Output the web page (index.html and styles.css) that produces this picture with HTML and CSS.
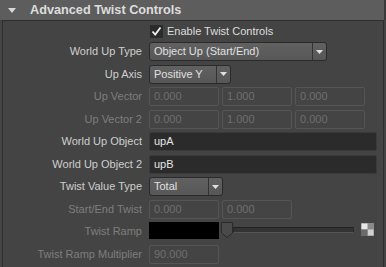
FILE: index.html
```html
<!DOCTYPE html>
<html lang="en">
<head>
    <meta charset="UTF-8">
    <title>Advanced Twist Controls</title>
    <link rel="stylesheet" href="styles.css">
</head>
<body>
    <div class="panel">
        <div class="header">
            <svg class="collapse" width="8" height="5" viewBox="0 0 8 5"><polygon points="0,0 8,0 4,5" fill="#d8d8d8"/></svg>
            <span class="title">Advanced Twist Controls</span>
        </div>

        <div class="body">
            <div class="row check-row">
                <span class="label"></span>
                <label class="check">
                    <span class="box">
                        <svg width="11" height="11" viewBox="0 0 11 11"><polyline points="1.5,5.5 4.2,8.5 9.5,1.5" fill="none" stroke="#f0f0f0" stroke-width="1.8"/></svg>
                    </span>
                    Enable Twist Controls
                </label>
            </div>

            <div class="row">
                <span class="label">World Up Type</span>
                <div class="dropdown" style="width: 178px">
                    <span class="value">Object Up (Start/End)</span>
                    <span class="drop-btn"><svg width="7" height="4" viewBox="0 0 7 4"><polygon points="0,0 7,0 3.5,4" fill="#e0e0e0"/></svg></span>
                </div>
            </div>

            <div class="row">
                <span class="label">Up Axis</span>
                <div class="dropdown" style="width: 82px">
                    <span class="value">Positive Y</span>
                    <span class="drop-btn"><svg width="7" height="4" viewBox="0 0 7 4"><polygon points="0,0 7,0 3.5,4" fill="#e0e0e0"/></svg></span>
                </div>
            </div>

            <div class="row">
                <span class="label off">Up Vector</span>
                <div class="fields">
                    <span class="num off">0.000</span>
                    <span class="num off">1.000</span>
                    <span class="num off">0.000</span>
                </div>
            </div>

            <div class="row">
                <span class="label off">Up Vector 2</span>
                <div class="fields">
                    <span class="num off">0.000</span>
                    <span class="num off">1.000</span>
                    <span class="num off">0.000</span>
                </div>
            </div>

            <div class="row">
                <span class="label">World Up Object</span>
                <span class="text-field">upA</span>
            </div>

            <div class="row">
                <span class="label">World Up Object 2</span>
                <span class="text-field">upB</span>
            </div>

            <div class="row">
                <span class="label">Twist Value Type</span>
                <div class="dropdown" style="width: 74px">
                    <span class="value">Total</span>
                    <span class="drop-btn"><svg width="7" height="4" viewBox="0 0 7 4"><polygon points="0,0 7,0 3.5,4" fill="#e0e0e0"/></svg></span>
                </div>
            </div>

            <div class="row">
                <span class="label off">Start/End Twist</span>
                <div class="fields">
                    <span class="num off">0.000</span>
                    <span class="num off">0.000</span>
                </div>
            </div>

            <div class="row">
                <span class="label off">Twist Ramp</span>
                <div class="ramp">
                    <span class="swatch"></span>
                    <div class="slider">
                        <svg class="handle" width="12" height="16" viewBox="0 0 12 16"><polygon points="0.5,0.5 11.5,0.5 11.5,11 6,15.5 0.5,11" fill="#4a4a4a" stroke="#2a2a2a"/></svg>
                        <span class="track"></span>
                    </div>
                    <svg class="checker" width="13" height="13" viewBox="0 0 13 13">
                        <rect x="0" y="0" width="13" height="13" fill="#8a8a8a"/>
                        <rect x="0.5" y="0.5" width="6" height="6" fill="#e8e8e8"/>
                        <rect x="6.5" y="6.5" width="6" height="6" fill="#d0d0d0"/>
                        <rect x="0" y="6.5" width="6.5" height="6.5" fill="#6a6a6a"/>
                    </svg>
                </div>
            </div>

            <div class="row">
                <span class="label off">Twist Ramp Multiplier</span>
                <div class="fields">
                    <span class="num off">90.000</span>
                </div>
            </div>
        </div>
    </div>
</body>
</html>
```

FILE: styles.css
```css
body {
    margin: 0;
    background: #444444;
    font-family: "Liberation Sans", Arial, sans-serif;
    font-size: 11px;
    color: #cccccc;
}
.panel {
    width: 386px;
    height: 267px;
}
.header {
    height: 20px;
    background: #5d5d5d;
    display: flex;
    align-items: center;
    border-right: 2px solid #3a3a3a;
}
.collapse {
    margin-left: 8px;
    margin-right: 14px;
}
.title {
    font-weight: bold;
    font-size: 12.7px;
    color: #dddddd;
}
.body {
    margin: 0 2px;
    border: 1px solid #2e2e2e;
    padding-top: 3px;
    height: 244px;
}
.row {
    display: flex;
    align-items: flex-start;
    height: 22.5px;
}
.row:last-child {
    height: 20px;
}
.check-row {
    height: 18px;
}
.label {
    width: 139px;
    margin-right: 7px;
    text-align: right;
    line-height: 19px;
    color: #cfcfcf;
    white-space: nowrap;
}
.label.off {
    color: #7e7e7e;
}
.check {
    display: flex;
    align-items: center;
    color: #dddddd;
    line-height: 14px;
}
.box {
    width: 13px;
    height: 13px;
    margin-left: 1px;
    margin-right: 4px;
    background: #2b2b2b;
    display: flex;
    align-items: center;
    justify-content: center;
}
.dropdown {
    height: 19px;
    box-sizing: border-box;
    display: flex;
    border: 1px solid #2a2a2a;
    border-radius: 3px;
    background: linear-gradient(#616161, #575757);
}
.dropdown .value {
    flex: 1;
    padding-left: 4px;
    line-height: 17px;
    color: #e0e0e0;
    white-space: nowrap;
}
.drop-btn {
    width: 13px;
    border-left: 1px solid #333333;
    display: flex;
    align-items: center;
    justify-content: center;
}
.fields {
    display: flex;
    gap: 3px;
}
.num {
    width: 70px;
    height: 19px;
    box-sizing: border-box;
    border: 1px solid #555555;
    border-radius: 2px;
    padding-left: 4px;
    line-height: 17px;
}
.num.off {
    color: #6f6f6f;
}
.text-field {
    width: 228px;
    height: 19px;
    box-sizing: border-box;
    background: #2b2b2b;
    border: 1px solid #3a3a3a;
    border-radius: 2px;
    padding-left: 4px;
    line-height: 17px;
    color: #e6e6e6;
}
.ramp {
    display: flex;
    align-items: flex-start;
}
.swatch {
    width: 70px;
    height: 17px;
    background: #000000;
}
.slider {
    display: flex;
    align-items: flex-start;
    margin-left: 2px;
}
.track {
    width: 119px;
    height: 4px;
    margin-top: 5px;
    background: #333333;
    border: 1px solid #2a2a2a;
    border-top-color: #222222;
    border-bottom-color: #555555;
}
.checker {
    margin-left: 7px;
    margin-top: 1px;
}
```
